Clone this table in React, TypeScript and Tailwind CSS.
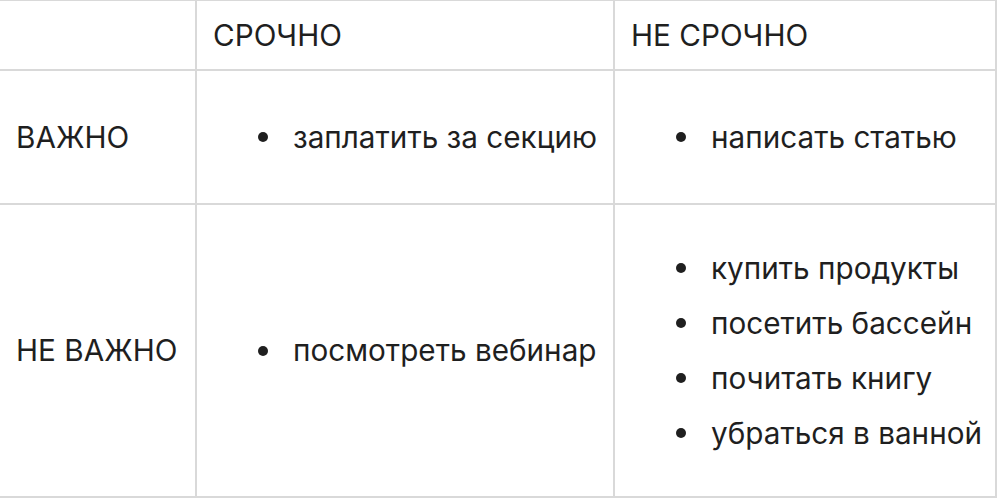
import type React from "react"

const rows: { label: string; urgent: string[]; notUrgent: string[] }[] = [
  { label: "ВАЖНО", urgent: ["заплатить за секцию"], notUrgent: ["написать статью"] },
  {
    label: "НЕ ВАЖНО",
    urgent: ["посмотреть вебинар"],
    notUrgent: ["купить продукты", "посетить бассейн", "почитать книгу", "убраться в ванной"],
  },
]

export default function App() {
  return (
    <div className="w-[1000px] h-[498px] overflow-hidden bg-white">
      <div
        className="-ml-[2px] -mt-px w-[999px] grid grid-cols-[195px_416px_380px] grid-rows-[68px_132px_291px] gap-[2px] p-[2px] bg-[#d9d9d9] text-[#1f1f1f] text-[29.7px]"
        style={{ fontFamily: "Inter, 'Noto Sans', sans-serif" }}
      >
        <Cell />
        <Cell>СРОЧНО</Cell>
        <Cell>НЕ СРОЧНО</Cell>
        {rows.map((row) => (
          <Row key={row.label} {...row} />
        ))}
      </div>
    </div>
  )
}

function Row({ label, urgent, notUrgent }: { label: string; urgent: string[]; notUrgent: string[] }) {
  return (
    <>
      <Cell>{label}</Cell>
      <Cell>
        <BulletList items={urgent} />
      </Cell>
      <Cell>
        <BulletList items={notUrgent} />
      </Cell>
    </>
  )
}

function Cell({ children }: { children?: React.ReactNode }) {
  return <div className="bg-white flex items-center px-4 leading-[45px] whitespace-nowrap">{children}</div>
}

function BulletList({ items }: { items: string[] }) {
  return (
    <ul className="flex flex-col gap-[10px]">
      {items.map((item) => (
        <li key={item} className="flex items-center">
          <span className="ml-[45px] mr-[25px] size-[10px] rounded-full bg-[#1f1f1f] shrink-0" />
          {item}
        </li>
      ))}
    </ul>
  )
}
